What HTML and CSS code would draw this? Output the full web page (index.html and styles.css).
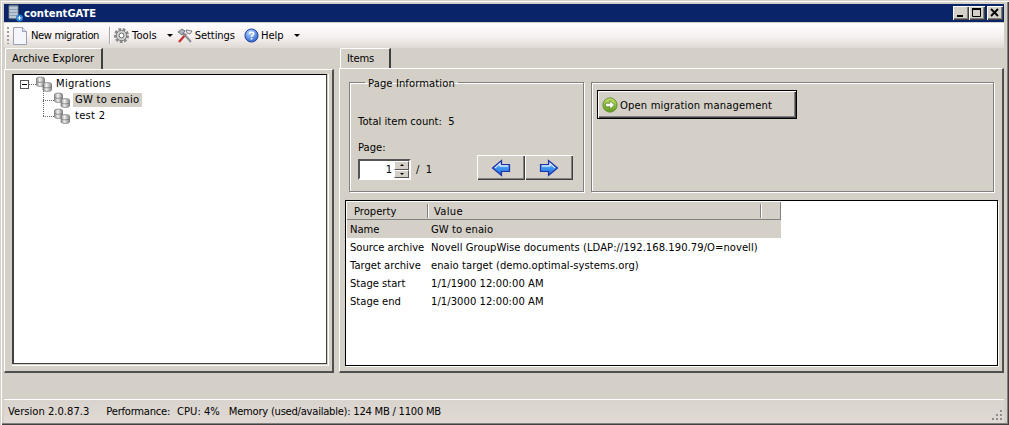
FILE: index.html
```html
<!DOCTYPE html>
<html lang="en">
<head>
<meta charset="utf-8">
<title>contentGATE</title>
<link rel="stylesheet" href="styles.css">
</head>
<body>
<svg class="defs" width="0" height="0" aria-hidden="true">
  <defs>
    <linearGradient id="cyl" x1="0" x2="1" y1="0" y2="0">
      <stop offset="0" stop-color="#8f8f8f"/><stop offset=".4" stop-color="#f2f2f2"/><stop offset="1" stop-color="#8a8a8a"/>
    </linearGradient>
    <linearGradient id="blue" x1="0" x2="0" y1="0" y2="1">
      <stop offset="0" stop-color="#bfe0ff"/><stop offset=".5" stop-color="#3f97f0"/><stop offset="1" stop-color="#1c64d8"/>
    </linearGradient>
    <linearGradient id="green" x1="0" x2="0" y1="0" y2="1">
      <stop offset="0" stop-color="#c6e26a"/><stop offset="1" stop-color="#5f9a1c"/>
    </linearGradient>
    <radialGradient id="helpg" cx=".4" cy=".3" r=".8">
      <stop offset="0" stop-color="#b9d8ff"/><stop offset="1" stop-color="#1f55c4"/>
    </radialGradient>
    <symbol id="db" viewBox="0 0 16 16">
      <g stroke="#777" stroke-width=".8" fill="url(#cyl)">
        <path d="M.5 2.500c0-1.800 8-1.800 8 0v6.500c0 1.800-8 1.800-8 0z"/>
        <path d="M.5 5.200c0 1.500 8 1.500 8 0" fill="none"/>
        <path d="M7 8c0-1.800 8.500-1.800 8.500 0v6c0 1.800-8.500 1.800-8.500 0z"/>
        <path d="M7 10.700c0 1.500 8.500 1.500 8.500 0" fill="none"/>
      </g>
    </symbol>
    <symbol id="arrow-right" viewBox="0 0 20 18">
      <path d="M1.500 5.500h8v-4l9 7.500-9 7.500v-4h-8z" fill="url(#blue)" stroke="#1f2fa8" stroke-width="1.200"/>
      <path d="M3 7h8V4.500L16 9" fill="none" stroke="#fff" stroke-width="1"/>
    </symbol>
    <symbol id="arrow-left" viewBox="0 0 20 18">
      <path d="M18.500 5.500h-8v-4l-9 7.500 9 7.500v-4h8z" fill="url(#blue)" stroke="#1f2fa8" stroke-width="1.200"/>
      <path d="M17 7H9V4.500L4 9" fill="none" stroke="#fff" stroke-width="1"/>
    </symbol>
  </defs>
</svg>

<div class="window">
  <header class="titlebar">
    <svg class="app-icon" viewBox="0 0 17 18" width="17" height="18">
      <rect x="1.500" y="1" width="10" height="14" rx="1.500" fill="#8fa2b4" stroke="#3c4c62"/>
      <path d="M2.500 4h8M2.500 7h8M2.500 10h8M2.500 13h8" stroke="#e4edf4" stroke-width="1.200"/>
      <circle cx="12.500" cy="14" r="3.500" fill="#2a7fd8"/>
      <path d="M10.500 14h4M12.500 12v4" stroke="#fff" stroke-width=".9"/>
    </svg>
    <span class="title-text">contentGATE</span>
    <div class="caption-buttons">
      <button class="cap-btn" aria-label="Minimize"><svg viewBox="0 0 16 14" width="16" height="14"><rect x="4" y="9" width="6" height="2" fill="#000"/></svg></button>
      <button class="cap-btn" aria-label="Maximize"><svg viewBox="0 0 16 14" width="16" height="14"><path d="M3.500 2.500h8v8h-8z" fill="none" stroke="#000"/><rect x="3" y="2" width="9" height="2" fill="#000"/></svg></button>
      <button class="cap-btn cap-close" aria-label="Close"><svg viewBox="0 0 16 14" width="16" height="14"><path d="M4 3l7 7M11 3l-7 7" stroke="#000" stroke-width="1.800"/></svg></button>
    </div>
  </header>

  <nav class="toolbar">
    <span class="grip"></span>
    <span class="tool tool-new">
      <svg viewBox="0 0 14 18" width="14" height="18"><path d="M.5 .5h9l4 4v13H.5z" fill="#f4f6fc" stroke="#9aa0b4"/><path d="M9.500 .5v4h4" fill="#dfe2ee" stroke="#9aa0b4"/></svg>
      <span class="tool-new-label">New migration</span>
    </span>
    <span class="sep"></span>
    <span class="tool tool-tools">
      <svg viewBox="0 0 18 18" width="17" height="17"><circle cx="9" cy="9" r="6" fill="none" stroke="#8a8a8a" stroke-width="4" stroke-dasharray="2.600 1.500"/><circle cx="9" cy="9" r="5.500" fill="#cfcfcf" stroke="#777"/><circle cx="9" cy="9" r="2.500" fill="#fff" stroke="#666"/></svg>
      Tools
    </span>
    <span class="caret caret-tools"></span>
    <span class="tool tool-settings">
      <svg viewBox="0 0 16 16" width="16" height="16"><path d="M2 14L9 6" stroke="#c9302c" stroke-width="2.200"/><path d="M14 14L6 5" stroke="#8a8f98" stroke-width="2"/><path d="M1 4l4-3 3 2-3 4z" fill="#aeb4bd" stroke="#4b5058" stroke-width=".7"/><path d="M9 2l6 1-2 3-3-1z" fill="#e5e7ea" stroke="#50555d" stroke-width=".7"/></svg>
      Settings
    </span>
    <span class="tool tool-help">
      <svg viewBox="0 0 16 16" width="15" height="15"><circle cx="8" cy="8" r="7" fill="url(#helpg)" stroke="#1b3f9c"/><path d="M5.800 6.200C5.800 3.800 10.400 3.800 10.400 6.200 10.400 7.900 8 7.800 8 9.500" fill="none" stroke="#fff" stroke-width="1.600"/><rect x="7.200" y="10.600" width="1.700" height="1.700" fill="#fff"/></svg>
      Help
    </span>
    <span class="caret caret-help"></span>
  </nav>

  <main class="content">
    <section class="pane pane-left">
      <div class="tab tab-explorer">Archive Explorer</div>
      <div class="tab-body body-left">
        <div class="tree">
          <div class="tree-row">
            <span class="expander"></span><span class="dots dots-root"></span>
            <svg class="db"><use href="#db"/></svg><span class="node-label root-label">Migrations</span>
          </div>
          <div class="tree-row child">
            <span class="dots dots-l"></span>
            <svg class="db"><use href="#db"/></svg><span class="node-label selected">GW to enaio</span>
          </div>
          <div class="tree-row child">
            <span class="dots dots-l"></span>
            <svg class="db"><use href="#db"/></svg><span class="node-label">test 2</span>
          </div>
        </div>
      </div>
    </section>

    <section class="pane pane-right">
      <div class="tab tab-items">Items</div>
      <div class="tab-body body-right">
        <div class="groups">
          <fieldset class="group group-page">
            <legend>Page Information</legend>
            <div class="count">Total item count:&nbsp; 5</div>
            <div class="page-label">Page:</div>
            <div class="pager">
              <div class="spinner">
                <span class="spin-value">1</span>
                <span class="spin-btns"><span class="spin-up"></span><span class="spin-down"></span></span>
              </div>
              <span class="page-total">/&nbsp; 1</span>
              <div class="nav-btns">
                <button class="nav-btn" aria-label="Previous"><svg width="20" height="18"><use href="#arrow-left"/></svg></button>
                <button class="nav-btn" aria-label="Next"><svg width="20" height="18"><use href="#arrow-right"/></svg></button>
              </div>
            </div>
          </fieldset>
          <div class="group group-actions">
            <button class="open-btn">
              <svg viewBox="0 0 18 18" width="16" height="16"><circle cx="9" cy="9" r="8" fill="url(#green)" stroke="#5b8a20"/><path d="M4 7h5V4l5 5-5 5v-3H4z" fill="#fff" stroke="#4f7a1a" stroke-width=".8"/></svg>
              <span class="open-label">Open migration management</span>
            </button>
          </div>
        </div>
        <div class="listview">
          <div class="list-head">
            <span class="col-prop head-cell">Property</span>
            <span class="col-val head-cell">Value</span>
            <span class="head-end"></span>
          </div>
          <div class="list-row selected-row"><span class="col-prop">Name</span><span class="col-val">GW to enaio</span></div>
          <div class="list-row"><span class="col-prop">Source archive</span><span class="col-val">Novell GroupWise documents (LDAP://192.168.190.79/O=novell)</span></div>
          <div class="list-row"><span class="col-prop">Target archive</span><span class="col-val">enaio target (demo.optimal-systems.org)</span></div>
          <div class="list-row"><span class="col-prop">Stage start</span><span class="col-val">1/1/1900 12:00:00 AM</span></div>
          <div class="list-row"><span class="col-prop">Stage end</span><span class="col-val">1/1/3000 12:00:00 AM</span></div>
        </div>
      </div>
    </section>
  </main>

  <footer class="statusbar">
    <span class="st-version">Version 2.0.87.3</span>
    <span class="st-perf">Performance:</span>
    <span class="st-cpu">CPU: 4%</span>
    <span class="st-mem">Memory (used/available): 124 MB / 1100 MB</span>
    <svg class="resize-grip" width="12" height="12" viewBox="0 0 12 12"><path d="M9 1h2v2H9zM5 5h2v2H5zM9 5h2v2H9zM1 9h2v2H1zM5 9h2v2H5zM9 9h2v2H9z" fill="#8c8c8c"/></svg>
  </footer>
</div>
</body>
</html>
```

FILE: styles.css
```css
* { box-sizing: border-box; }
html, body { margin: 0; padding: 0; }
body {
  width: 1009px;
  height: 425px;
  overflow: hidden;
  background: #d4d0c8;
  font-family: "DejaVu Sans", Verdana, sans-serif;
  font-size: 10px;
  color: #000;
}
.defs { display: block; height: 0; }
button { font: inherit; color: inherit; padding: 0; margin: 0; }

.window {
  width: 1009px;
  height: 425px;
  display: flex;
  flex-direction: column;
  padding: 4px 5px 2px 4px;
  background: #d4d0c8;
  box-shadow: inset 1px 1px 0 #d4d0c8, inset 2px 2px 0 #fff, inset -1px -1px 0 #404040, inset -2px -2px 0 #808080;
}

/* Title bar */
.titlebar {
  height: 18px;
  flex: none;
  display: flex;
  align-items: center;
  background: #0a246a;
  color: #fff;
  padding: 0 1px 0 3px;
}
.app-icon { flex: none; }
.title-text { font-weight: 700; font-size: 10px; }
.caption-buttons { margin-left: auto; display: flex; }
.cap-btn {
  width: 16px;
  height: 14px;
  background: #d4d0c8;
  border: none;
  display: block;
  box-shadow: inset 1px 1px 0 #fff, inset -1px -1px 0 #404040, inset -2px -2px 0 #808080;
}
.cap-btn svg { display: block; }
.cap-close { margin-left: 2px; }

/* Toolbar */
.toolbar {
  height: 25px;
  flex: none;
  margin-top: 1px;
  display: flex;
  align-items: center;
  background: linear-gradient(#fff 0%, #f6f1f0 55%, #dfd9d4 100%);
  padding-left: 3px;
  white-space: nowrap;
}
.grip {
  width: 2px;
  height: 17px;
  background: repeating-linear-gradient(#9a9a9a 0 2px, transparent 2px 4px);
}
.tool { display: flex; align-items: center; gap: 2px; }
.tool-new { margin-left: 4px; gap: 4px; }
.tool-new-label { letter-spacing: -.4px; }
.sep { width: 1px; height: 17px; background: #a6a6a6; box-shadow: 1px 0 0 #fff; margin-left: 10px; }
.tool-tools { margin-left: 3px; }
.caret { width: 0; height: 0; border: 3px solid transparent; border-top-color: #000; border-bottom: 0; }
.caret-tools { margin-left: 10px; }
.tool-settings { margin-left: 4px; letter-spacing: -.1px; }
.tool-help { margin-left: 9px; }
.caret-help { margin-left: 10px; }

/* Panes */
.content { flex: 1; display: flex; gap: 5px; min-height: 0; }
.pane { display: flex; flex-direction: column; }
.pane-left { width: 330px; }
.pane-right { width: 665px; }
.tab {
  flex: none;
  height: 21px;
  padding: 4px 0 0 6px;
  border-top: 1px solid #fff;
  border-left: 1px solid #fff;
  border-right: 2px solid #404040;
  border-top-left-radius: 2px;
  background: #d4d0c8;
}
.tab-explorer { width: 98px; margin-left: 1px; }
.tab-items { width: 51px; margin-left: 1px; height: 20px; letter-spacing: -.2px; }
.tab-body {
  flex: none;
  background: #d4d0c8;
  border-top: 1px solid #fff;
  border-left: 1px solid #fff;
  border-right: 2px solid #505050;
  border-bottom: 2px solid #505050;
}
.body-left { height: 304px; padding: 4px 5px 7px 7px; }
.body-right { height: 305px; padding: 13px 4px 5px 5px; }

/* Tree */
.tree {
  height: 100%;
  background: #fff;
  border-top: 1px solid #000;
  border-left: 2px solid #404040;
  border-right: 1px solid #404040;
  border-bottom: 1px solid #404040;
  box-shadow: 0 0 0 1px #d4d0c8, 1px 1px 0 1px #fff;
  padding: 1px 0 0 6px;
}
.tree-row { height: 16px; display: flex; align-items: center; position: relative; }
.expander {
  width: 9px;
  height: 9px;
  flex: none;
  border: 1px solid #555;
  background: linear-gradient(#000, #000) center / 5px 1px no-repeat;
}
.dots { flex: none; height: 1px; background: repeating-linear-gradient(90deg, #666 0 1px, transparent 1px 2px); }
.dots-root { width: 7px; }
.db { width: 16px; height: 16px; flex: none; }
.node-label { margin-left: 3px; padding: 1px 3px 2px 2px; white-space: nowrap; letter-spacing: .25px; }
.root-label { margin-left: 2px; }
.child { padding-left: 23px; }
.dots-l { width: 11px; position: relative; }
.dots-l::before {
  content: "";
  position: absolute;
  left: 0;
  bottom: 0;
  width: 1px;
  height: 16px;
  background: repeating-linear-gradient(#666 0 1px, transparent 1px 2px);
}
.selected { background: #d4d0c8; }

/* Group boxes */
.groups { display: flex; gap: 7px; padding-left: 4px; height: 110px; }
.group {
  margin: 0;
  height: 110px;
  background: #d4d0c8;
  border: 1px solid #808080;
  box-shadow: 1px 1px 0 #fff, inset 1px 1px 0 #fff;
}
.group-page { width: 235px; padding: 0 8px; margin-top: -7px; height: 117px; min-width: 0; }
.group-page legend { padding: 2px 3px 0; margin-left: 7px; line-height: 13px; letter-spacing: .1px; }
.group-actions { width: 403px; padding: 7px 5px; }
.count { margin-top: 25px; line-height: 13px; }
.page-label { margin-top: 13px; line-height: 13px; }
.pager { display: flex; align-items: flex-end; margin-top: 1px; height: 25px; }
.spinner {
  width: 53px;
  height: 21px;
  display: flex;
  background: #fff;
  border: 2px solid #555;
  border-right-color: #fff;
  border-bottom-color: #fff;
}
.spin-value { flex: 1; text-align: right; line-height: 17px; padding-right: 2px; }
.spin-btns { width: 15px; display: flex; flex-direction: column; background: #d4d0c8; }
.spin-up, .spin-down {
  flex: 1;
  position: relative;
  border-top: 1px solid #fff;
  border-left: 1px solid #fff;
  border-right: 1px solid #555;
  border-bottom: 1px solid #555;
}
.spin-up::after, .spin-down::after {
  content: "";
  position: absolute;
  left: 5px;
  top: 2px;
  border: 2px solid transparent;
}
.spin-up::after { border-top: 0; border-bottom-color: #000; }
.spin-down::after { border-bottom: 0; border-top-color: #000; }
.page-total { margin-left: 5px; line-height: 21px; }
.nav-btns { margin-left: auto; margin-right: 2px; display: flex; }
.nav-btn {
  width: 48px;
  height: 25px;
  background: #d4d0c8;
  border: none;
  display: flex;
  align-items: center;
  justify-content: center;
  box-shadow: inset 1px 1px 0 #fff, inset -1px -1px 0 #404040, inset -2px -2px 0 #808080;
}
.open-btn {
  width: 200px;
  height: 29px;
  display: flex;
  align-items: center;
  gap: 2px;
  background: #d4d0c8;
  padding: 0 0 0 4px;
  border: 1px solid #000;
  box-shadow: inset 1px 1px 0 #fff, inset -1px -1px 0 #404040, inset -2px -2px 0 #808080;
}
.open-label { letter-spacing: .15px; padding-top: 2px; }

/* List view */
.listview {
  margin-top: 8px;
  height: 166px;
  background: #fff;
  border: 1px solid #000;
  box-shadow: 1px 1px 0 #fff;
  padding: 1px 0 0 1px;
}
.list-head {
  width: 434px;
  height: 18px;
  display: flex;
  align-items: center;
  background: #d4d0c8;
  border-bottom: 1px solid #808080;
  border-right: 1px solid #808080;
}
.list-row { width: 434px; height: 18px; display: flex; align-items: center; white-space: nowrap; }
.selected-row { background: #d4d0c8; }
.col-prop { width: 81px; padding-left: 3px; flex: none; }
.col-val { flex: 1; padding-left: 3px; letter-spacing: .05px; }
.head-cell.col-prop { padding-left: 7px; border-right: 1px solid #808080; box-shadow: 1px 0 0 #fff; height: 14px; width: 81px; line-height: 16px; }
.head-cell.col-val { padding-left: 6px; line-height: 16px; height: 14px; letter-spacing: .3px; }
.head-end { width: 20px; height: 14px; border-left: 1px solid #808080; box-shadow: inset 1px 0 0 #fff; }

/* Status bar */
.statusbar {
  flex: none;
  height: 24px;
  margin-top: 26px;
  display: flex;
  align-items: center;
  position: relative;
  border-top: 1px solid #fff;
  background: linear-gradient(#d8d4cd, #e2d9d4);
  padding-left: 4px;
  white-space: nowrap;
}
.st-perf { margin-left: 17px; letter-spacing: -.25px; }
.st-cpu { margin-left: 7px; }
.st-mem { margin-left: 9px; letter-spacing: -.25px; }
.resize-grip { position: absolute; right: 1px; bottom: 2px; }
```
